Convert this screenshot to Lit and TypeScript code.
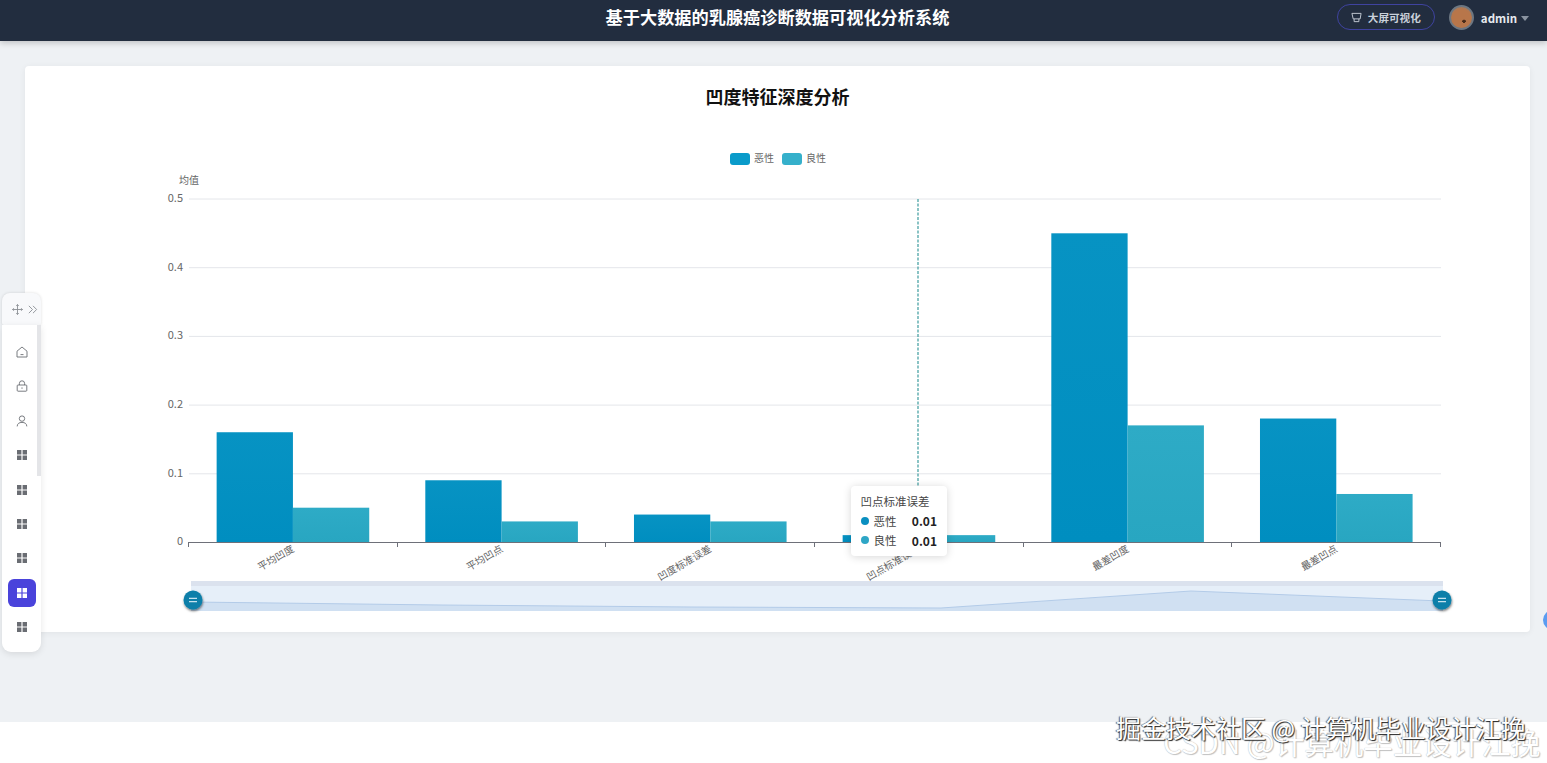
import { LitElement, html, svg, css } from 'lit';
import { customElement } from 'lit/decorators.js';

const GRID_YS = [199, 267.7, 336.4, 405.1, 473.8, 542];
const GRID_LABELS = ['0.5', '0.4', '0.3', '0.2', '0.1', '0'];
const X0 = 188.6;
const CAT_W = 208.67;
const BAR_W = 76.3;
const PX_PER_UNIT = 686;

const DATA = [
  { name: '平均凹度', bad: 0.16, good: 0.05 },
  { name: '平均凹点', bad: 0.09, good: 0.03 },
  { name: '凹度标准误差', bad: 0.04, good: 0.03 },
  { name: '凹点标准误差', bad: 0.01, good: 0.01 },
  { name: '最差凹度', bad: 0.45, good: 0.17 },
  { name: '最差凹点', bad: 0.18, good: 0.07 },
];

const gridIcon = html`<svg class="ic" viewBox="0 0 12 12"><path d="M1 1h4.4v4.4H1zM6.6 1H11v4.4H6.6zM1 6.6h4.4V11H1zM6.6 6.6H11V11H6.6z" fill="currentColor"/></svg>`;
const homeIcon = html`<svg class="ic" viewBox="0 0 12 12" fill="none" stroke="currentColor" stroke-width=".9"><path d="M1 5.2 6 1l5 4.2V11H1z" stroke-linejoin="round"/><path d="M4.5 8.6h3"/></svg>`;
const lockIcon = html`<svg class="ic" viewBox="0 0 12 12" fill="none" stroke="currentColor" stroke-width=".9"><rect x="1.2" y="5" width="9.6" height="6.2" rx=".8"/><path d="M3.4 5V3.4a2.6 2.6 0 0 1 5.2 0V5M6 7.4v1.4"/></svg>`;
const userIcon = html`<svg class="ic" viewBox="0 0 12 12" fill="none" stroke="currentColor" stroke-width=".9"><circle cx="6" cy="3.6" r="2.7"/><path d="M1.2 11.4c0-2.8 2-4 4.8-4s4.8 1.2 4.8 4"/></svg>`;

@customElement('chart-view')
export class ChartView extends LitElement {
  static styles = css`
    :host {
      display: block;
      position: relative;
    }
    svg {
      display: block;
    }
    text {
      font-family: 'Noto Sans CJK SC', 'Liberation Sans', sans-serif;
      font-size: 10px;
      fill: #666;
    }
    text.num {
      font-size: 11px;
    }
    .tip {
      position: absolute;
      left: 826px;
      top: 358px;
      width: 96px;
      height: 70px;
      box-sizing: border-box;
      padding: 7px 10px 7px 9.5px;
      background: #fff;
      border-radius: 4px;
      box-shadow: 0 1px 9px rgba(0, 0, 0, 0.16);
      font-size: 11.5px;
      color: #444;
    }
    .tip-title {
      line-height: 16px;
      margin-bottom: 2px;
    }
    .tip-row {
      display: flex;
      align-items: center;
      height: 19.5px;
      font-size: 11.5px;
      color: #444;
    }
    .dot {
      width: 8px;
      height: 8px;
      border-radius: 50%;
      margin-right: 5px;
    }
    .dot.bad {
      background: #0a8fc0;
    }
    .dot.good {
      background: #2ea6c6;
    }
    .val {
      margin-left: auto;
      font-weight: 700;
      font-size: 12px;
      color: #222;
    }
  `;

  render() {
    const zoomLine = '191,602 441,605 691,607 941,608 1191,591 1441,601';
    return html`
      <svg width="1505" height="504" viewBox="25 128 1505 504">
        <defs>
          <linearGradient id="bad" x1="0" y1="0" x2="0" y2="1">
            <stop offset="0" stop-color="#0793c3" />
            <stop offset="1" stop-color="#008ec0" />
          </linearGradient>
          <linearGradient id="good" x1="0" y1="0" x2="0" y2="1">
            <stop offset="0" stop-color="#2eabc6" />
            <stop offset="1" stop-color="#28a6c1" />
          </linearGradient>
          <filter id="hs" x="-40%" y="-40%" width="180%" height="180%">
            <feDropShadow dx="0.5" dy="1.5" stdDeviation="1" flood-color="#000" flood-opacity=".55" />
          </filter>
        </defs>

        <rect x="730" y="153" width="20" height="12" rx="3" fill="#0a9bca" />
        <text x="754" y="162">恶性</text>
        <rect x="782" y="153" width="20" height="12" rx="3" fill="#35b0cb" />
        <text x="806" y="162">良性</text>

        <text x="179" y="184">均值</text>

        ${GRID_YS.map((y, i) =>
          svg`<text class="num" x="183" y=${y + 3} text-anchor="end">${GRID_LABELS[i]}</text>
            ${i < 5 ? svg`<line x1="189" x2="1441" y1=${y} y2=${y} stroke="#e4e6ea" />` : ''}`
        )}

        ${DATA.map((d, i) => {
          const mid = X0 + CAT_W * i + CAT_W / 2;
          const hBad = d.bad * PX_PER_UNIT;
          const hGood = d.good * PX_PER_UNIT;
          return svg`
            <rect x=${mid - BAR_W} y=${542 - hBad} width=${BAR_W} height=${hBad} fill="url(#bad)" />
            <rect x=${mid} y=${542 - hGood} width=${BAR_W} height=${hGood} fill="url(#good)" />
            <text transform="translate(${mid + 2} 551) rotate(-30)" text-anchor="end">${d.name}</text>
          `;
        })}

        <line x1="189" x2="1441" y1="542.5" y2="542.5" stroke="#6e7079" />
        ${[0, 1, 2, 3, 4, 5, 6].map((i) => {
          const x = Math.round(X0 + 0.4 + CAT_W * i) - 0.5;
          return svg`<line x1=${x} x2=${x} y1="542" y2="547" stroke="#6e7079" />`;
        })}

        <line x1="918" x2="918" y1="199" y2="490" stroke="#3d9c9e" stroke-dasharray="3 1.5" stroke-width="1.2" />

        <rect x="191" y="581" width="1252" height="30" fill="#e6eff9" />
        <rect x="191" y="581" width="1252" height="5" fill="#dbe2ee" />
        <polygon points="191,611 ${zoomLine} 1443,601 1443,611" fill="#d0e0f2" />
        <polyline points=${zoomLine} fill="none" stroke="#b3cbe8" />

        ${[193, 1442].map(
          (x) => svg`<g filter="url(#hs)">
            <circle cx=${x} cy="600" r="9.5" fill="#0f7fa9" />
            <path d="M${x - 4} 598.3h8M${x - 4} 601.7h8" stroke="#c5e2ee" stroke-width="1.2" />
          </g>`
        )}
      </svg>
      <div class="tip">
        <div class="tip-title">凹点标准误差</div>
        <div class="tip-row"><span class="dot bad"></span>恶性<span class="val">0.01</span></div>
        <div class="tip-row"><span class="dot good"></span>良性<span class="val">0.01</span></div>
      </div>
    `;
  }
}

@customElement('app-root')
export class AppRoot extends LitElement {
  static styles = css`
    :host {
      display: block;
      position: relative;
      width: 1547px;
      height: 763px;
      overflow: hidden;
      background: #fff;
      font-family: 'Noto Sans CJK SC', 'Liberation Sans', sans-serif;
    }
    .top {
      position: relative;
      z-index: 2;
      height: 41px;
      display: flex;
      align-items: center;
      justify-content: flex-end;
      background: #222d3f;
      box-shadow: 0 2px 6px rgba(0, 0, 0, 0.2);
      padding-right: 18px;
    }
    .brand {
      position: absolute;
      left: 8px;
      right: 0;
      top: 4px;
      text-align: center;
      font-size: 17.2px;
      line-height: 25px;
      font-weight: 700;
      color: #fff;
    }
    .screen-btn {
      display: flex;
      align-items: center;
      gap: 6px;
      box-sizing: border-box;
      width: 98px;
      height: 26px;
      margin: -7px 14px 0 0;
      padding-left: 13px;
      border: 1px solid #3f43a0;
      border-radius: 13px;
      color: #c9d0da;
      font-size: 10.6px;
      font-weight: 700;
    }
    .screen-btn svg {
      width: 11px;
      height: 11px;
    }
    .avatar {
      width: 25px;
      height: 25px;
      box-sizing: border-box;
      margin: -7px 7px 0 0;
      border: 2px solid #6d7782;
      border-radius: 50%;
      background: radial-gradient(circle at 62% 68%, #4a2c1a 0 8%, transparent 10%),
        radial-gradient(circle at 50% 60%, #b8764a 60%, #8e7f72);
    }
    .user {
      margin-top: -6px;
      font-size: 11.5px;
      font-weight: 700;
      color: #e6e9ee;
    }
    .caret {
      width: 0;
      height: 0;
      margin: -5px 0 0 4px;
      border: 4px solid transparent;
      border-top: 5px solid #8a93a0;
      border-bottom: 0;
    }
    .main {
      height: 681px;
      box-sizing: border-box;
      padding: 25px 17px 0 25px;
      background: #eef1f4;
    }
    .card {
      height: 566px;
      background: #fff;
      border-radius: 4px;
      box-shadow: 0 1px 6px rgba(0, 0, 0, 0.06);
    }
    h1 {
      margin: 0;
      height: 62px;
      box-sizing: border-box;
      padding-top: 17px;
      text-align: center;
      font-size: 18px;
      line-height: 27px;
      font-weight: 700;
      color: #111;
    }
    .dock {
      position: absolute;
      left: 2px;
      top: 293px;
      width: 39px;
      height: 359px;
      z-index: 3;
    }
    .dock-head {
      display: flex;
      align-items: center;
      justify-content: center;
      gap: 4px;
      height: 32px;
      box-sizing: border-box;
      padding-left: 6px;
      background: #f8f9fb;
      border-radius: 8px 8px 2px 2px;
      box-shadow: 0 0 3px rgba(0, 0, 0, 0.14);
      color: #8c9096;
    }
    .dock-head svg {
      width: 11px;
      height: 11px;
    }
    .dock-body {
      display: flex;
      flex-direction: column;
      align-items: flex-start;
      height: 327px;
      box-sizing: border-box;
      padding-top: 13px;
      background: #fff;
      border-radius: 0 0 9px 9px;
      box-shadow: 0 2px 7px rgba(0, 0, 0, 0.1);
      color: #6a6d73;
    }
    .item {
      display: flex;
      align-items: center;
      justify-content: center;
      flex: none;
      width: 28px;
      height: 28px;
      margin: 0 0 6.4px 6px;
      border-radius: 6px;
    }
    .item.active {
      background: #4a43db;
      color: #fff;
    }
    .ic {
      width: 12px;
      height: 12px;
    }
    .thumb {
      position: absolute;
      left: 35px;
      top: 32px;
      width: 4px;
      height: 151px;
      background: #e4e5e8;
    }
    .edge-dot {
      position: absolute;
      left: 1543px;
      top: 610px;
      width: 20px;
      height: 20px;
      border-radius: 50%;
      background: #5b9cf0;
    }
    .mark {
      position: absolute;
      white-space: nowrap;
      line-height: 30px;
    }
    .mark.csdn {
      left: 1163px;
      top: 726px;
      color: #fff;
      text-shadow: 0 0 1px #a8a8a8, 1px 1px 1px #c4c4c4;
      font-size: 29.5px;
    }
    .mark.juejin {
      left: 1116px;
      top: 712px;
      color: #fff;
      text-shadow: 1px 1px 1px #222, -1px 0 1px #555;
      font-size: 25px;
    }
  `;

  render() {
    return html`
      <header class="top">
        <div class="brand">基于大数据的乳腺癌诊断数据可视化分析系统</div>
        <div class="screen-btn">
          <svg viewBox="0 0 12 12" fill="none" stroke="currentColor" stroke-width="1"><path d="M1 1.5h10l-1 6H2.4zM3.4 7.5v3M8.6 7.5v3M3.4 10.5h5.2" /></svg>
          大屏可视化
        </div>
        <div class="avatar"></div>
        <span class="user">admin</span>
        <span class="caret"></span>
      </header>
      <main class="main">
        <section class="card">
          <h1>凹度特征深度分析</h1>
          <chart-view></chart-view>
        </section>
      </main>
      <nav class="dock">
        <div class="dock-head">
          <svg viewBox="0 0 12 12" fill="none" stroke="currentColor" stroke-width="1"><path d="M6 .5v11M.5 6h11M4.6 2 6 .6 7.4 2M4.6 10 6 11.4 7.4 10M2 4.6.6 6 2 7.4M10 4.6 11.4 6 10 7.4" /></svg>
          <svg viewBox="0 0 12 12" fill="none" stroke="currentColor" stroke-width="1"><path d="M2 2l4 4-4 4M6.5 2l4 4-4 4" /></svg>
        </div>
        <div class="dock-body">
          <div class="item">${homeIcon}</div>
          <div class="item">${lockIcon}</div>
          <div class="item">${userIcon}</div>
          <div class="item">${gridIcon}</div>
          <div class="item">${gridIcon}</div>
          <div class="item">${gridIcon}</div>
          <div class="item">${gridIcon}</div>
          <div class="item active">${gridIcon}</div>
          <div class="item">${gridIcon}</div>
        </div>
        <div class="thumb"></div>
      </nav>
      <div class="edge-dot"></div>
      <div class="mark csdn">CSDN @计算机毕业设计江挽</div>
      <div class="mark juejin">掘金技术社区 @ 计算机毕业设计江挽</div>
    `;
  }
}
